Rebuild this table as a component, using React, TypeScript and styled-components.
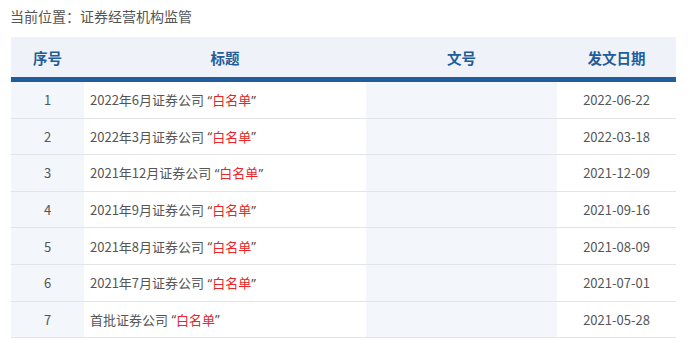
import React, {FC} from "react";
import styled, {createGlobalStyle} from "styled-components";

const GlobalStyle = createGlobalStyle`
  html, body {
    margin: 0;
    padding: 0;
    background: #fff;
  }
  body {
    font-family: "Noto Sans CJK SC", "Noto Sans", sans-serif;
  }
`;

const COLS = '73px 282px 191px 119px';
const BLUE = '#215d9c';
const SHADE = '#f3f6fa';
const LINE = '#e1e4e8';

const Page = styled.div`
  padding: 6px 0 0 11px;
  width: 665px;
`;

const Crumb = styled.div`
  font-size: 14px;
  line-height: 20px;
  color: #555;
  margin-left: -1px;
  height: 31px;
`;

const HeadRow = styled.div`
  display: grid;
  grid-template-columns: ${COLS};
  height: 40px;
  background: #eff3f9;
  border-bottom: 5px solid ${BLUE};
`;

const HeadCell = styled.div`
  display: flex;
  align-items: center;
  justify-content: center;
  font-size: 14.5px;
  font-weight: 700;
  color: ${BLUE};
`;

const Row = styled.div`
  display: grid;
  grid-template-columns: ${COLS};
  height: 36.6px;
  box-sizing: border-box;
  border-bottom: 1px solid ${LINE};
`;

const Cell = styled.div<{shaded?: boolean; align?: 'left' | 'center'}>`
  display: flex;
  align-items: center;
  justify-content: ${p => (p.align === 'left' ? 'flex-start' : 'center')};
  padding-left: ${p => (p.align === 'left' ? '6px' : '0')};
  background: ${p => (p.shaded ? SHADE : 'transparent')};
  font-size: 13px;
  color: #555;
  white-space: pre;
`;

// quotes set in a latin face so they sit narrow, as in the original
const Quote = styled.span`
  font-family: "Noto Sans", sans-serif;
  color: #555;
`;

const Red = styled.span`
  color: #e8262a;
`;

const rows = [
  {no: 1, title: '2022年6月证券公司', date: '2022-06-22'},
  {no: 2, title: '2022年3月证券公司', date: '2022-03-18'},
  {no: 3, title: '2021年12月证券公司', date: '2021-12-09'},
  {no: 4, title: '2021年9月证券公司', date: '2021-09-16'},
  {no: 5, title: '2021年8月证券公司', date: '2021-08-09'},
  {no: 6, title: '2021年7月证券公司', date: '2021-07-01'},
  {no: 7, title: '首批证券公司', date: '2021-05-28'},
];

const App: FC = () => (
  <Page>
    <GlobalStyle/>
    <Crumb>当前位置：证券经营机构监管</Crumb>
    <HeadRow>
      <HeadCell>序号</HeadCell>
      <HeadCell>标题</HeadCell>
      <HeadCell>文号</HeadCell>
      <HeadCell>发文日期</HeadCell>
    </HeadRow>
    {rows.map(r => (
      <Row key={r.no}>
        <Cell shaded>{r.no}</Cell>
        <Cell align="left">{r.title}<Quote> “</Quote><Red>白名单</Red><Quote>”</Quote></Cell>
        <Cell shaded/>
        <Cell>{r.date}</Cell>
      </Row>
    ))}
  </Page>
);

export default App;
